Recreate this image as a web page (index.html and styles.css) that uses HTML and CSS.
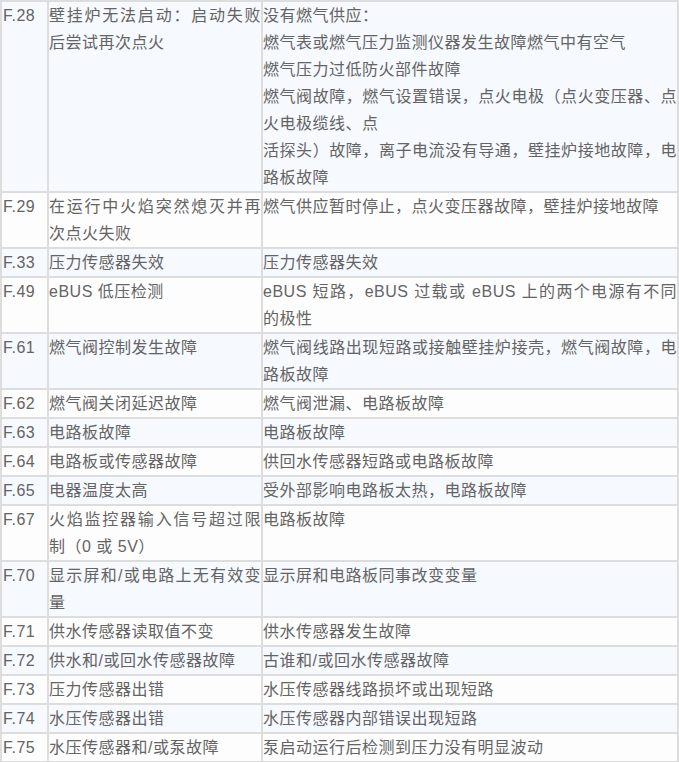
FILE: index.html
```html
<!DOCTYPE html>
<html lang="zh-CN">
<head>
<meta charset="utf-8">
<link rel="stylesheet" href="styles.css">
</head>
<body>
<table class="codes">
<colgroup><col class="c-code"><col class="c-desc"><col class="c-cause"></colgroup>
<tbody>
<tr><td>F.28</td><td>壁挂炉无法启动：启动失败后尝试再次点火</td><td>没有燃气供应：<br>燃气表或燃气压力监测仪器发生故障燃气中有空气<br>燃气压力过低防火部件故障<br>燃气阀故障，燃气设置错误，点火电极（点火变压器、点火电极缆线、点<br>活探头）故障，离子电流没有导通，壁挂炉接地故障，电路板故障</td></tr>
<tr><td>F.29</td><td>在运行中火焰突然熄灭并再次点火失败</td><td>燃气供应暂时停止，点火变压器故障，壁挂炉接地故障</td></tr>
<tr><td>F.33</td><td>压力传感器失效</td><td>压力传感器失效</td></tr>
<tr><td>F.49</td><td>eBUS 低压检测</td><td>eBUS 短路，eBUS 过载或 eBUS 上的两个电源有不同的极性</td></tr>
<tr><td>F.61</td><td>燃气阀控制发生故障</td><td>燃气阀线路出现短路或接触壁挂炉接壳，燃气阀故障，电路板故障</td></tr>
<tr><td>F.62</td><td>燃气阀关闭延迟故障</td><td>燃气阀泄漏、电路板故障</td></tr>
<tr><td>F.63</td><td>电路板故障</td><td>电路板故障</td></tr>
<tr><td>F.64</td><td>电路板或传感器故障</td><td>供回水传感器短路或电路板故障</td></tr>
<tr><td>F.65</td><td>电器温度太高</td><td>受外部影响电路板太热，电路板故障</td></tr>
<tr><td>F.67</td><td>火焰监控器输入信号超过限制（0 或 5V）</td><td>电路板故障</td></tr>
<tr><td>F.70</td><td>显示屏和/或电路上无有效变量</td><td>显示屏和电路板同事改变变量</td></tr>
<tr><td>F.71</td><td>供水传感器读取值不变</td><td>供水传感器发生故障</td></tr>
<tr><td>F.72</td><td>供水和/或回水传感器故障</td><td>古谁和/或回水传感器故障</td></tr>
<tr><td>F.73</td><td>压力传感器出错</td><td>水压传感器线路损坏或出现短路</td></tr>
<tr><td>F.74</td><td>水压传感器出错</td><td>水压传感器内部错误出现短路</td></tr>
<tr><td>F.75</td><td>水压传感器和/或泵故障</td><td>泵启动运行后检测到压力没有明显波动</td></tr>
</tbody>
</table>
</body>
</html>
```
FILE: styles.css
```css
html, body {
  margin: 0;
  padding: 0;
  background: #ffffff;
}
.codes {
  border-collapse: collapse;
  table-layout: fixed;
  width: 679px;
  font-family: "Liberation Sans", "Noto Sans CJK SC", sans-serif;
  font-size: 16px;
  line-height: 27px;
  letter-spacing: 0.5px;
  color: #646464;
}
.c-code { width: 47px; }
.c-desc { width: 214px; }
.c-cause { width: 416px; }
.codes td {
  border: 2px solid #dddddd;
  padding: 0;
  vertical-align: top;
  text-align: justify;
}
.codes td:first-child {
  padding-left: 1px;
  text-align: left;
}
.codes tr:nth-child(odd) td { background: #f6f9fe; }
.codes tr:nth-child(even) td { background: #fdfdfd; }
```
